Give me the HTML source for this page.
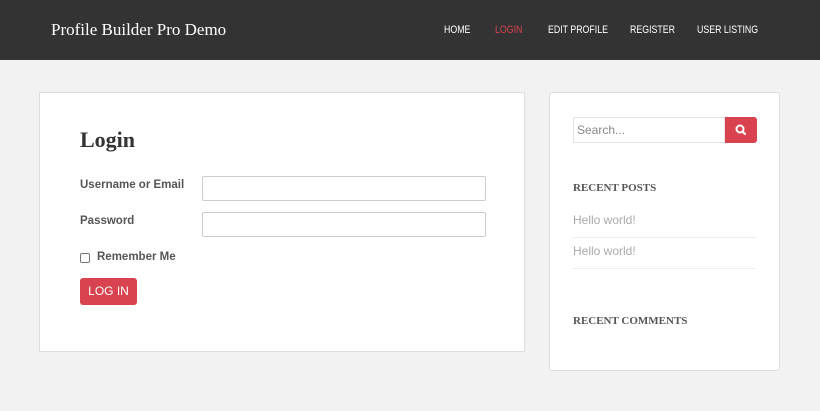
<!DOCTYPE html>
<html><head><meta charset="utf-8"><style>
*{box-sizing:border-box;margin:0;padding:0}
body{width:820px;height:411px;background:#f2f2f2;font-family:"Liberation Sans",sans-serif;position:relative;overflow:hidden}
.hdr{position:absolute;left:0;top:0;width:820px;height:60px;background:#333}
.logo{position:absolute;left:51px;top:20px;color:#fff;font-family:"Liberation Serif",serif;font-size:17px}
.nav a{position:absolute;top:24px;font-size:11px;color:#fff;text-decoration:none;transform:scaleX(.8);transform-origin:left;white-space:nowrap}
.main{position:absolute;left:39px;top:92px;width:486px;height:260px;background:#fff;border:1px solid #ddd}
h1{position:absolute;left:40px;top:34px;font-family:"Liberation Serif",serif;font-weight:bold;font-size:22px;color:#333}
.lbl{position:absolute;left:40px;font-size:11.5px;font-weight:bold;color:#555}
.inp{position:absolute;left:162px;width:284px;height:25px;border:1px solid #ccc;border-radius:2px}
.cb{position:absolute;left:40px;top:160px;width:10px;height:10px;border:1px solid #777;border-radius:2px}
.btn{position:absolute;left:40px;top:185px;width:57px;height:27px;background:#d9434f;border-radius:3px;color:#fff;font-size:12px;text-align:center;line-height:27px}
.side{position:absolute;left:549px;top:92px;width:231px;height:279px;background:#fff;border:1px solid #ddd;border-radius:3px}
.srch{position:absolute;left:23px;top:24px;width:152px;height:26px;border:1px solid #e5e5e5;font-size:12px;color:#888;padding:5px 3px}
.sbtn{position:absolute;left:175px;top:24px;width:32px;height:26px;background:#d9434f;border-radius:0 3px 3px 0}
.wt{position:absolute;left:23px;font-family:"Liberation Serif",serif;font-weight:bold;font-size:11px;color:#555}
.post{position:absolute;left:23px;width:183px;height:31px;border-bottom:1px solid #eee;font-size:12px;color:#aaa;padding-top:6px}
</style></head><body>
<div class="hdr"><div class="logo">Profile Builder Pro Demo</div>
<div class="nav"><a style="left:444px">HOME</a><a style="left:495px;color:#d9434f">LOGIN</a><a style="left:548px">EDIT PROFILE</a><a style="left:630px">REGISTER</a><a style="left:697px">USER LISTING</a></div></div>
<div class="main"><h1>Login</h1>
<div class="lbl" style="top:86px">Username or Email</div><div class="inp" style="top:83px"></div>
<div class="lbl" style="top:122px">Password</div><div class="inp" style="top:119px"></div>
<div class="cb"></div><div class="lbl" style="left:57px;top:158px">Remember Me</div>
<div class="btn">LOG IN</div></div>
<div class="side"><div class="srch">Search...</div>
<div class="sbtn"><svg width="32" height="26" viewBox="0 0 32 26"><circle cx="15" cy="12" r="3.5" fill="none" stroke="#fff" stroke-width="2"/><path d="M17.5 14.5L20 17" stroke="#fff" stroke-width="2.2" stroke-linecap="round"/></svg></div>
<div class="wt" style="top:89px">RECENT POSTS</div>
<div class="post" style="top:114px">Hello world!</div>
<div class="post" style="top:145px">Hello world!</div>
<div class="wt" style="top:222px">RECENT COMMENTS</div></div>
</body></html>
